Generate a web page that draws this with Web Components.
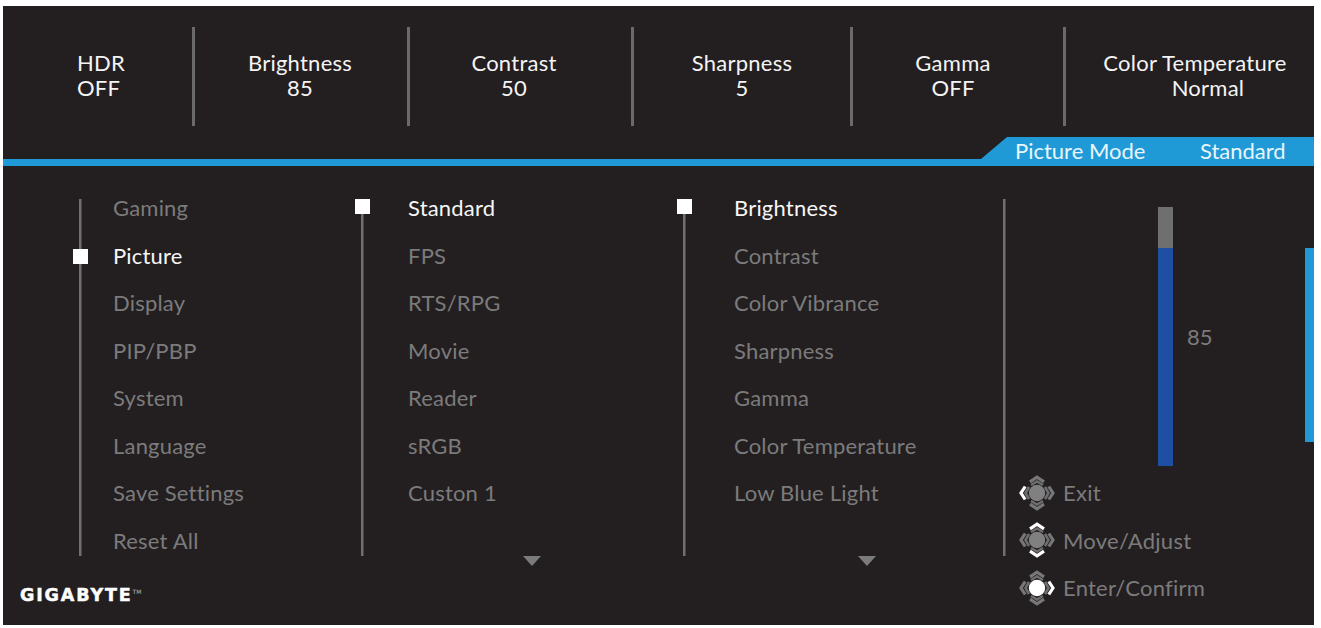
<!DOCTYPE html>
<html lang="en">
<head>
<meta charset="utf-8">
<title>OSD</title>
<style>
  html, body { margin: 0; background: #fff; }
  body { padding: 6px 7px 3px 3px; font-family: Lato, "Open Sans", sans-serif; }
</style>
</head>
<body>
<osd-panel>
  <status-bar slot="status">
    <status-cell style="--w:192px" label="HDR" value="OFF" align="left"></status-cell>
    <status-cell style="--w:215px; --pr:2px" label="Brightness" value="85"></status-cell>
    <status-cell style="--w:224px; --pr:13px" label="Contrast" value="50"></status-cell>
    <status-cell style="--w:219px" label="Sharpness" value="5"></status-cell>
    <status-cell style="--w:213px; --pr:10px" label="Gamma" value="OFF"></status-cell>
    <status-cell style="--w:248px" label="Color Temperature" value="Normal" last></status-cell>
  </status-bar>
  <mode-strip slot="status" label="Picture Mode" value="Standard"></mode-strip>

  <osd-menu slot="left" first>
    <osd-item>Gaming</osd-item>
    <osd-item active style="--mark:17.5px">Picture</osd-item>
    <osd-item>Display</osd-item>
    <osd-item>PIP/PBP</osd-item>
    <osd-item>System</osd-item>
    <osd-item>Language</osd-item>
    <osd-item>Save Settings</osd-item>
    <osd-item>Reset All</osd-item>
  </osd-menu>
  <brand-logo slot="left"></brand-logo>

  <osd-menu slot="mid" style="--w:322px; --pad:47px; --arrow:162px" more>
    <osd-item active>Standard</osd-item>
    <osd-item>FPS</osd-item>
    <osd-item>RTS/RPG</osd-item>
    <osd-item>Movie</osd-item>
    <osd-item>Reader</osd-item>
    <osd-item>sRGB</osd-item>
    <osd-item>Custon 1</osd-item>
  </osd-menu>
  <osd-menu slot="mid" style="--w:320px; --pad:51px; --arrow:175px" more>
    <osd-item active>Brightness</osd-item>
    <osd-item>Contrast</osd-item>
    <osd-item>Color Vibrance</osd-item>
    <osd-item>Sharpness</osd-item>
    <osd-item>Gamma</osd-item>
    <osd-item>Color Temperature</osd-item>
    <osd-item>Low Blue Light</osd-item>
  </osd-menu>

  <value-column slot="mid">
    <level-slider value="85"></level-slider>
    <key-hint dir="left">Exit</key-hint>
    <key-hint dir="vert">Move/Adjust</key-hint>
    <key-hint dir="center">Enter/Confirm</key-hint>
  </value-column>
</osd-panel>

<script>
const GREY = '#6f6f70';
const BLUE = '#1f9ad6';

class OsdPanel extends HTMLElement {
  constructor() {
    super();
    this.attachShadow({ mode: 'open' });
    this.shadowRoot.innerHTML = `
      <style>
        :host {
          display: flex;
          flex-direction: column;
          position: relative;
          width: 1311px;
          height: 619px;
          background: #231f20;
          color: #7b7b7c;
        }
        .body { flex: 1; display: flex; padding-top: 18px; }
        .left { width: 358px; padding-left: 17px; box-sizing: border-box; }
        .thumb {
          position: absolute;
          right: 0;
          top: 242px;
          width: 9px;
          height: 194px;
          background: ${BLUE};
        }
      </style>
      <slot name="status"></slot>
      <div class="body">
        <div class="left"><slot name="left"></slot></div>
        <slot name="mid"></slot>
      </div>
      <div class="thumb"></div>
    `;
  }
}

class StatusBar extends HTMLElement {
  constructor() {
    super();
    this.attachShadow({ mode: 'open' });
    this.shadowRoot.innerHTML = `
      <style>
        :host { display: flex; height: 131px; padding-top: 21px; box-sizing: border-box; }
      </style>
      <slot></slot>
    `;
  }
}

class StatusCell extends HTMLElement {
  constructor() {
    super();
    this.attachShadow({ mode: 'open' });
  }

  connectedCallback() {
    const label = this.getAttribute('label');
    const value = this.getAttribute('value');
    this.shadowRoot.innerHTML = `
      <style>
        :host {
          display: flex;
          flex-direction: column;
          justify-content: center;
          width: var(--w);
          height: 99px;
          padding: 0 var(--pr, 0) 4px 0;
          box-sizing: border-box;
          border-right: 3px solid #6a6a6b;
          color: #f4f4f4;
          font-size: 22px;
          letter-spacing: .25px;
          line-height: 25px;
          text-align: center;
          white-space: nowrap;
        }
        :host([align="left"]) { text-align: left; padding-left: 74px; }
        :host([last]) { border-right: 0; padding-left: 10px; }
        :host([last]) span { padding-left: 26px; }
      </style>
      <div>${label}<br><span>${value}</span></div>
    `;
  }
}

class ModeStrip extends HTMLElement {
  constructor() {
    super();
    this.attachShadow({ mode: 'open' });
  }

  connectedCallback() {
    this.shadowRoot.innerHTML = `
      <style>
        :host {
          display: flex;
          justify-content: flex-end;
          height: 29px;
          background: linear-gradient(transparent 22px, ${BLUE} 22px);
        }
        .tab {
          display: flex;
          width: 333px;
          box-sizing: border-box;
          padding-left: 34px;
          background: ${BLUE};
          clip-path: polygon(26px 0, 100% 0, 100% 100%, 0 100%, 0 22px);
          color: #e8f5fc;
          font-size: 22px;
          line-height: 27px;
          white-space: nowrap;
        }
        .label { width: 185px; }
      </style>
      <div class="tab">
        <span class="label">${this.getAttribute('label')}</span>
        <span>${this.getAttribute('value')}</span>
      </div>
    `;
  }
}

class OsdMenu extends HTMLElement {
  constructor() {
    super();
    this.attachShadow({ mode: 'open' });
    this.shadowRoot.innerHTML = `
      <style>
        :host {
          display: block;
          position: relative;
          width: var(--w, 282px);
          height: 380px;
          padding-left: var(--pad, 34px);
          box-sizing: border-box;
          background: linear-gradient(${GREY}, ${GREY}) no-repeat 0 15px / 2.5px 357px;
        }
        :host([first]) { margin-left: 59px; }
        .more {
          display: none;
          position: absolute;
          left: var(--arrow);
          top: 372px;
          width: 18px;
          height: 10px;
        }
        :host([more]) .more { display: block; }
      </style>
      <slot></slot>
      <svg class="more" viewBox="0 0 18 10"><path d="M0 0H18L9 10Z" fill="#7b7b7c"/></svg>
    `;
  }
}

class OsdItem extends HTMLElement {
  constructor() {
    super();
    this.attachShadow({ mode: 'open' });
    this.shadowRoot.innerHTML = `
      <style>
        :host {
          display: block;
          height: 47.5px;
          line-height: 47px;
          font-size: 22px;
          letter-spacing: .2px;
          white-space: nowrap;
        }
        :host([active]) { color: #f6f6f6; }
        .mark {
          display: none;
          position: absolute;
          left: -6px;
          margin-top: var(--mark, 15px);
          width: 15px;
          height: 15px;
          background: #fff;
        }
        :host([active]) .mark { display: block; }
      </style>
      <div class="mark"></div>
      <slot></slot>
    `;
  }
}

class BrandLogo extends HTMLElement {
  constructor() {
    super();
    this.attachShadow({ mode: 'open' });
    this.shadowRoot.innerHTML = `
      <style>
        :host {
          display: block;
          margin-top: 20px;
          color: #fff;
          font-family: "DejaVu Sans", sans-serif;
          font-weight: 700;
          font-size: 17.5px;
          line-height: 22px;
          letter-spacing: 1.85px;
          -webkit-text-stroke: .5px #fff;
          white-space: nowrap;
        }
        sup {
          font-size: 6px;
          font-weight: 400;
          vertical-align: 7px;
          line-height: 0;
          color: #bbb;
          letter-spacing: 0;
          -webkit-text-stroke: 0;
        }
      </style>
      GIGABYTE<sup>TM</sup>
    `;
  }
}

class ValueColumn extends HTMLElement {
  constructor() {
    super();
    this.attachShadow({ mode: 'open' });
    this.shadowRoot.innerHTML = `
      <style>
        :host {
          display: block;
          flex: 1;
          height: 380px;
          padding-top: 23px;
          box-sizing: border-box;
          background: linear-gradient(${GREY}, ${GREY}) no-repeat 0 15px / 2.5px 357px;
        }
      </style>
      <slot></slot>
    `;
  }
}

class LevelSlider extends HTMLElement {
  constructor() {
    super();
    this.attachShadow({ mode: 'open' });
  }

  connectedCallback() {
    const value = Number(this.getAttribute('value'));
    this.shadowRoot.innerHTML = `
      <style>
        :host {
          display: flex;
          align-items: center;
          gap: 14px;
          height: 259px;
          margin: 0 0 3px 155px;
          font-size: 22px;
        }
        .track {
          display: flex;
          flex-direction: column;
          justify-content: flex-end;
          width: 15px;
          height: 100%;
          background: ${GREY};
        }
        .fill { height: ${(value * 218.5 / 85).toFixed(1)}px; background: #1f4fa3; }
      </style>
      <div class="track"><div class="fill"></div></div>
      <span>${value}</span>
    `;
  }
}

class KeyHint extends HTMLElement {
  constructor() {
    super();
    this.attachShadow({ mode: 'open' });
  }

  connectedCallback() {
    const dir = this.getAttribute('dir');
    const off = '#77777a';
    const vert = dir === 'vert' ? '#fff' : off;
    const left = dir === 'left' ? '#fff' : off;
    const right = dir === 'center' ? '#fff' : off;
    const disc = dir === 'center' ? '#fff' : '#808081';
    this.shadowRoot.innerHTML = `
      <style>
        :host {
          display: flex;
          align-items: center;
          gap: 8px;
          height: 47.5px;
          margin-left: 16px;
          font-size: 22px;
          letter-spacing: .25px;
          white-space: nowrap;
        }
        svg { width: 36px; height: 36px; flex: none; }
      </style>
      <svg viewBox="0 0 36 36" fill="none" stroke-width="3.2">
        <circle cx="18" cy="18" r="8.2" fill="${disc}"/>
        <path d="M11 6.8 18 2.2 25 6.8" stroke="${vert}"/>
        <path d="M11 29.2 18 33.8 25 29.2" stroke="${vert}"/>
        <path d="M6.2 11.5 2 18 6.2 24.5" stroke="${left}"/>
        <path d="M29.8 11.5 34 18 29.8 24.5" stroke="${right}"/>
        <path d="M12 10 18 6.5 24 10M12 26 18 29.5 24 26M10 12 6.5 18 10 24M26 12 29.5 18 26 24" stroke="#6e6e71" stroke-width="2.6"/>
      </svg>
      <slot></slot>
    `;
  }
}

customElements.define('osd-panel', OsdPanel);
customElements.define('status-bar', StatusBar);
customElements.define('status-cell', StatusCell);
customElements.define('mode-strip', ModeStrip);
customElements.define('osd-menu', OsdMenu);
customElements.define('osd-item', OsdItem);
customElements.define('brand-logo', BrandLogo);
customElements.define('value-column', ValueColumn);
customElements.define('level-slider', LevelSlider);
customElements.define('key-hint', KeyHint);
</script>
</body>
</html>
